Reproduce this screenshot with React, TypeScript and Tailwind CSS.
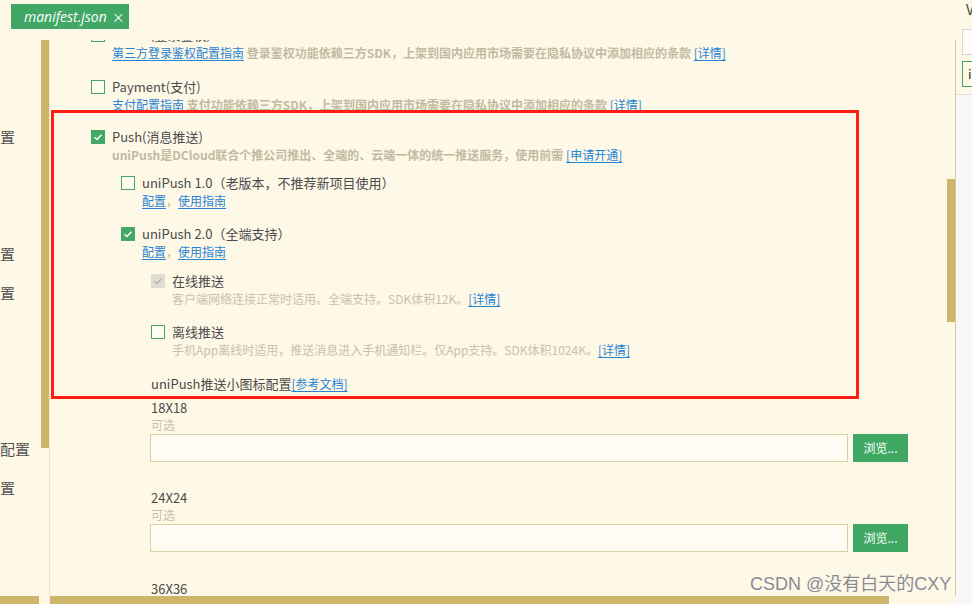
import React from 'react';

const Check: React.FC<{ state: 'off' | 'on' | 'disabled' }> = ({ state }) => {
  if (state === 'off') {
    return <span className="block w-[14px] h-[14px] border border-[#45a867] bg-[#fffcf2] shrink-0" />;
  }
  const bg = state === 'on' ? 'bg-[#45a867]' : 'bg-[#e1ddd2]';
  const stroke = state === 'on' ? '#ffffff' : '#b5b2ab';
  return (
    <span className={`flex items-center justify-center w-[14px] h-[14px] ${bg} shrink-0`}>
      <svg width="10" height="10" viewBox="0 0 10 10">
        <path d="M1.5 5.2 L4 7.5 L8.5 2.8" fill="none" stroke={stroke} strokeWidth="1.5" />
      </svg>
    </span>
  );
};

const Link: React.FC<{ children: React.ReactNode }> = ({ children }) => (
  <span className="font-normal text-[#2683d6] underline underline-offset-2">{children}</span>
);

const Option: React.FC<{
  state: 'off' | 'on' | 'disabled';
  label: string;
  className?: string;
}> = ({ state, label, className }) => (
  <div className={`flex items-center h-[18px] ${className ?? ''}`}>
    <Check state={state} />
    <span className="ml-[7px] text-[13px] leading-[18px] text-[#4b4b4b] whitespace-nowrap">{label}</span>
  </div>
);

const FileRow: React.FC = () => (
  <div className="flex ml-[100px] h-[28px]">
    <div className="w-[698px] h-[28px] border border-[#dccfa6] bg-[#fffcf4]" />
    <button className="ml-[5px] w-[55px] h-[28px] bg-[#40a764] text-white text-[12px]">浏览...</button>
  </div>
);

export default function App() {
  return (
    <div className="relative w-[972px] h-[604px] overflow-hidden bg-[#fef8e7] flex [font-family:'Noto_Sans_CJK_SC',sans-serif]">
      {/* editor column */}
      <div className="w-[956px] h-full flex flex-col">
        {/* tab bar */}
        <div className="h-[40px] shrink-0 pt-[4px] pl-[11px]">
          <div className="w-[118px] h-[25px] bg-[#40a764] flex items-center pl-[13px] text-white">
            <span className="italic text-[14px] [font-family:'Open_Sans',sans-serif]">manifest.json</span>
            <span className="ml-[5px] text-[13px] leading-none">×</span>
          </div>
        </div>

        {/* body */}
        <div className="flex h-[556px]">
          {/* left tree, scrolled */}
          <div className="w-[41px] overflow-hidden text-[15px] leading-[20px] text-[#555] whitespace-nowrap">
            <div className="mt-[87px]">置</div>
            <div className="mt-[97px]">置</div>
            <div className="mt-[19px]">置</div>
            <div className="mt-[136px]">配置</div>
            <div className="mt-[19px]">置</div>
          </div>
          <div className="w-[8px]">
            <div className="h-[408px] bg-[#cfb56a]" />
          </div>
          <div className="w-[1px] bg-[#f0e6c6]" />

          {/* main form */}
          <div className="w-[897px] h-full overflow-hidden">
            <div className="ml-[41px] mt-[-14px] text-[12px] leading-[17px]">
              <Option state="off" label="OAuth(登录鉴权)" />
              <div className="ml-[21px] h-[17px] whitespace-nowrap font-semibold text-[#c3baa2]">
                <Link>第三方登录鉴权配置指南</Link> 登录鉴权功能依赖三方SDK，上架到国内应用市场需要在隐私协议中添加相应的条款 <Link>[详情]</Link>
              </div>

              <Option state="off" label="Payment(支付)" className="mt-[17px]" />
              <div className="ml-[21px] h-[17px] whitespace-nowrap font-semibold text-[#c3baa2]">
                <Link>支付配置指南</Link> 支付功能依赖三方SDK，上架到国内应用市场需要在隐私协议中添加相应的条款 <Link>[详情]</Link>
              </div>

              <Option state="on" label="Push(消息推送)" className="mt-[15px]" />
              <div className="ml-[21px] h-[17px] whitespace-nowrap font-semibold text-[#c3baa2]">
                uniPush是DCloud联合个推公司推出、全端的、云端一体的统一推送服务，使用前需 <Link>[申请开通]</Link>
              </div>

              <div className="ml-[30px]">
                <Option state="off" label="uniPush 1.0（老版本，不推荐新项目使用）" className="mt-[11px]" />
                <div className="ml-[21px] h-[17px] whitespace-nowrap text-[#c3baa2]">
                  <Link>配置</Link>，<Link>使用指南</Link>
                </div>

                <Option state="on" label="uniPush 2.0（全端支持）" className="mt-[16px]" />
                <div className="ml-[21px] h-[17px] whitespace-nowrap text-[#c3baa2]">
                  <Link>配置</Link>，<Link>使用指南</Link>
                </div>

                <div className="ml-[30px]">
                  <Option state="disabled" label="在线推送" className="mt-[12px]" />
                  <div className="ml-[21px] h-[17px] whitespace-nowrap text-[#c9c1ab]">
                    客户端网络连接正常时适用。全端支持。SDK体积12K。<Link>[详情]</Link>
                  </div>

                  <Option state="off" label="离线推送" className="mt-[16px]" />
                  <div className="ml-[21px] h-[17px] whitespace-nowrap text-[#c9c1ab]">
                    手机App离线时适用，推送消息进入手机通知栏。仅App支持。SDK体积1024K。<Link>[详情]</Link>
                  </div>
                </div>
              </div>
            </div>

            <div className="ml-[101px] mt-[17px] h-[18px] text-[13px] leading-[18px] text-[#4b4b4b] whitespace-nowrap">
              uniPush推送小图标配置<span className="text-[12px]"><Link>[参考文档]</Link></span>
            </div>

            <div className="ml-[101px] mt-[6px] h-[18px] text-[13px] leading-[18px] text-[#4b4b4b]">18X18</div>
            <div className="ml-[101px] h-[16px] text-[12px] leading-[16px] text-[#c9c1ab]">可选</div>
            <div className="mt-[1px]">
              <FileRow />
            </div>

            <div className="ml-[101px] mt-[27px] h-[18px] text-[13px] leading-[18px] text-[#4b4b4b]">24X24</div>
            <div className="ml-[101px] h-[16px] text-[12px] leading-[16px] text-[#c9c1ab]">可选</div>
            <div className="mt-[1px]">
              <FileRow />
            </div>

            <div className="ml-[101px] mt-[28px] h-[18px] text-[13px] leading-[18px] text-[#4b4b4b]">36X36</div>
          </div>

          {/* vertical scrollbar */}
          <div className="w-[8px] pt-[139px]">
            <div className="h-[143px] bg-[#cfb56a]" />
          </div>
          <div className="w-[1px] bg-[#d8c9a0]" />
        </div>

        {/* horizontal scrollbars */}
        <div className="flex h-[8px]">
          <div className="w-[39px] bg-[#cfb56a]" />
          <div className="w-[11px]" />
          <div className="w-[839px] bg-[#cfb56a]" />
        </div>
      </div>

      {/* right panel */}
      <div className="w-[16px] h-full flex flex-col">
        <div className="h-[95px] border-b border-[#dcdcdc] pl-[6px] overflow-hidden">
          <div className="pl-[4px] pt-[1px] text-[14px] leading-[16px] text-[#444]">V</div>
          <div className="mt-[12px] w-[20px] h-[26px] border border-[#d6d6d6] bg-[#fffdf6]" />
          <div className="mt-[6px] w-[20px] h-[26px] border border-[#45a867] pl-[5px] text-[13px] leading-[24px] text-[#333]">i</div>
        </div>
        <div className="flex-1 bg-[#f8f8f8]" />
      </div>

      {/* annotation box */}
      <div className="absolute left-[51px] top-[110px] w-[808px] h-[289px] border-[3px] border-[#ff1e14]" />

      {/* watermark */}
      <div className="absolute left-[750px] top-[573px] text-[18px] leading-[22px] text-[#8a8a8a] whitespace-nowrap [font-family:'Liberation_Sans','Noto_Sans_CJK_SC',sans-serif] [text-shadow:0_0_2px_#fff,0_0_1px_#fff]">
        CSDN @没有白天的CXY
      </div>
    </div>
  );
}
